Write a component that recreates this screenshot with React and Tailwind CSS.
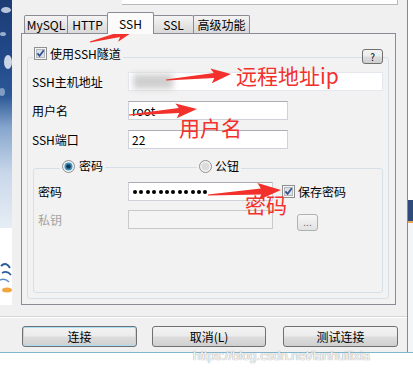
import React from "react";

function Checkbox() {
  return (
    <svg width="13" height="13" viewBox="0 0 13 13" className="shrink-0 block">
      <rect x="0.5" y="0.5" width="12" height="12" fill="#f6f6f6" stroke="#8e8f8f" />
      <rect x="2.5" y="2.5" width="8" height="8" fill="#dde2e8" stroke="#b3b8bf" />
      <path d="M3.4 6.3 L5.6 8.9 L9.8 3.2" fill="none" stroke="#34548e" strokeWidth="1.8" />
    </svg>
  );
}

function Radio({ checked }) {
  return (
    <svg width="13" height="13" viewBox="0 0 13 13" className="shrink-0 block">
      <circle cx="6.5" cy="6.5" r="6" fill="#f4f4f4" stroke="#8e8f8f" />
      {checked ? (
        <>
          <circle cx="6.5" cy="6.5" r="4" fill="#3f92c0" />
          <circle cx="6.5" cy="6.5" r="2.3" fill="#0e3a5a" />
        </>
      ) : (
        <circle cx="6.5" cy="6.5" r="4" fill="#dcdcdc" />
      )}
    </svg>
  );
}

function arrow(x1, y1, x2, y2, tailW, shaftW, headL, headW) {
  const dx = x2 - x1;
  const dy = y2 - y1;
  const L = Math.hypot(dx, dy);
  const ux = dx / L;
  const uy = dy / L;
  const nx = -uy;
  const ny = ux;
  const bx = x2 - ux * headL;
  const by = y2 - uy * headL;
  const wx = bx - ux * 3;
  const wy = by - uy * 3;
  const p = [
    [x1 + (nx * tailW) / 2, y1 + (ny * tailW) / 2],
    [bx + (nx * shaftW) / 2, by + (ny * shaftW) / 2],
    [wx + (nx * headW) / 2, wy + (ny * headW) / 2],
    [x2, y2],
    [wx - (nx * headW) / 2, wy - (ny * headW) / 2],
    [bx - (nx * shaftW) / 2, by - (ny * shaftW) / 2],
    [x1 - (nx * tailW) / 2, y1 - (ny * tailW) / 2],
  ];
  return p.map((q) => q[0].toFixed(1) + "," + q[1].toFixed(1)).join(" ");
}

const btn =
  "flex items-center justify-center rounded-[3px] border border-[#707070] bg-[linear-gradient(180deg,#f3f3f3_0%,#ebebeb_48%,#dddddd_52%,#cfcfcf_100%)] text-[12px] text-black";

export default function App() {
  return (
    <div className="relative w-[413px] h-[374px] overflow-hidden bg-white text-[12px] leading-[16px] text-black font-['Noto_Sans_CJK_SC','Noto_Sans',sans-serif]">
      <div className="flex h-[352px]">
        <div className="flex flex-col w-[407px]">
          <div className="flex h-[305px]">
            {/* left background strip */}
            <div className="w-[12px] flex flex-col">
              <div className="relative h-[228px] bg-[linear-gradient(180deg,#1c3c74_0%,#23498a_25%,#2c5896_42%,#86a6cd_56%,#c9d7ea_76%,#e7edf5_100%)]">
                <svg width="12" height="120" className="absolute left-0 top-0">
                  <ellipse cx="6" cy="10" rx="5" ry="3" fill="#dfe8f3" opacity="0.8" />
                  <ellipse cx="3" cy="34" rx="3" ry="2" fill="#c9d8ea" opacity="0.7" />
                  <ellipse cx="8" cy="62" rx="4" ry="7" fill="#e9eff6" opacity="0.85" />
                  <ellipse cx="2" cy="92" rx="3" ry="4" fill="#b9cbe2" opacity="0.6" />
                </svg>
              </div>
              <div className="flex-1 bg-white relative">
                <svg width="12" height="77" className="absolute left-0 top-0">
                  <path d="M1 38 Q6 33 10 40" stroke="#2b5d9c" strokeWidth="2" fill="none" />
                  <path d="M2 45 Q7 42 11 47" stroke="#2b5d9c" strokeWidth="1.6" fill="none" />
                  <path d="M0 52 Q5 50 9 54" stroke="#5a8cc4" strokeWidth="1.4" fill="none" />
                  <ellipse cx="7" cy="62" rx="5" ry="2.5" fill="#f0a742" />
                </svg>
              </div>
            </div>

            {/* dialog upper */}
            <div className="w-[395px] bg-[#f0f0f0] flex flex-col">
              <div className="h-[5px] ml-[110px] w-[276px] bg-white border-b border-r border-[#b9b9b9]" />

              {/* tabs */}
              <div className="h-[28px] flex items-end pl-[12px]">
                <div className="w-[44px] h-[18px] flex items-center justify-center border border-b-0 border-[#898c95] rounded-t-[2px] bg-[linear-gradient(180deg,#f4f4f4,#e3e3e3_60%,#d9d9d9)]">
                  MySQL
                </div>
                <div className="-ml-px w-[41px] h-[18px] flex items-center justify-center border border-b-0 border-[#898c95] rounded-t-[2px] bg-[linear-gradient(180deg,#f4f4f4,#e3e3e3_60%,#d9d9d9)]">
                  HTTP
                </div>
                <div className="relative z-10 -ml-px -mb-px w-[47px] h-[22px] flex items-center justify-center border border-b-0 border-[#898c95] rounded-t-[2px] bg-[#fbfbfb]">
                  SSH
                </div>
                <div className="-ml-px w-[41px] h-[18px] flex items-center justify-center border border-b-0 border-[#898c95] rounded-t-[2px] bg-[linear-gradient(180deg,#f4f4f4,#e3e3e3_60%,#d9d9d9)]">
                  SSL
                </div>
                <div className="-ml-px w-[57px] h-[18px] flex items-center justify-center border border-b-0 border-[#898c95] rounded-t-[2px] bg-[linear-gradient(180deg,#f4f4f4,#e3e3e3_60%,#d9d9d9)]">
                  高级功能
                </div>
              </div>

              {/* tab panel */}
              <div className="ml-[9px] w-[375px] h-[272px] border border-[#898c95] bg-[#f2f2f2] pt-[13px] pl-[5px]">
                <div className="relative">
                  <fieldset className="w-[362px] h-[252px] border border-[#d5dfe5] rounded-[3px]">
                    <legend className="ml-[5px] h-[20px]">
                      <div className="flex items-center gap-[3px] h-[13px] px-[1px]">
                        <Checkbox />
                        <span className="pr-[1px]">使用SSH隧道</span>
                      </div>
                    </legend>

                    <div className="mt-[5px] flex items-center pl-[4px]">
                      <div className="w-[96px]">SSH主机地址</div>
                      <div className="w-[255px] h-[19px] bg-white border border-[#e4e7ec] flex items-center">
                        <div className="ml-[4px] w-[40px] h-[15px] bg-[#cfcfcf] blur-[3px]" />
                      </div>
                    </div>
                    <div className="mt-[10px] flex items-center pl-[4px]">
                      <div className="w-[96px]">用户名</div>
                      <div className="w-[160px] h-[19px] bg-white border border-[#cfd2d8] border-t-[#abadb3] flex items-center pl-[3px]">
                        root
                      </div>
                    </div>
                    <div className="mt-[10px] flex items-center pl-[4px]">
                      <div className="w-[96px]">SSH端口</div>
                      <div className="w-[160px] h-[19px] bg-white border border-[#cfd2d8] border-t-[#abadb3] flex items-center pl-[3px]">
                        22
                      </div>
                    </div>

                    <fieldset className="mt-[10px] ml-[5px] w-[350px] h-[134px] border border-[#d5dfe5] rounded-[3px]">
                      <legend className="ml-[26px] h-[18px]">
                        <div className="flex items-start">
                          <div className="flex items-center h-[14px] pl-[2px] pr-[2px] gap-[4px]">
                            <Radio checked />
                            <span>密码</span>
                          </div>
                          <div className="w-[92px] h-px mt-[8px] bg-[#d5dfe5]" />
                          <div className="flex items-center h-[14px] pl-[2px] pr-[2px] gap-[3px]">
                            <Radio />
                            <span>公钮</span>
                          </div>
                        </div>
                      </legend>

                      <div className="mt-[5px] flex items-center pl-[4px]">
                        <div className="w-[90px]">密码</div>
                        <div className="w-[145px] h-[19px] bg-white border border-[#cfd2d8] border-t-[#abadb3] flex items-center pl-[4px] gap-[2.4px]">
                          {Array.from({ length: 12 }).map((_, i) => (
                            <span key={i} className="w-[4px] h-[4px] rounded-full bg-black" />
                          ))}
                        </div>
                        <div className="ml-[9px]">
                          <Checkbox />
                        </div>
                        <span className="ml-[3px]">保存密码</span>
                      </div>
                      <div className="mt-[9px] flex items-start pl-[4px]">
                        <div className="w-[90px] h-[19px] flex items-center text-[#a3a3a3]">私钥</div>
                        <div className="w-[145px] h-[19px] bg-[#f4f4f4] border border-[#c9c9c9]" />
                        <div className="ml-[24px] mt-[4px] w-[21px] h-[17px] rounded-[3px] border border-[#adb2b5] bg-[linear-gradient(180deg,#f7f7f7,#ececec_50%,#e2e2e2)] flex items-end justify-center pb-[3px] text-[10px] leading-[10px] text-[#6d6d6d]">
                          ...
                        </div>
                      </div>
                    </fieldset>
                  </fieldset>
                  <div className="absolute left-[335px] top-[2px] w-[21px] h-[15px] rounded-[3px] border border-[#707070] bg-[linear-gradient(180deg,#f3f3f3_0%,#ebebeb_48%,#dddddd_52%,#cfcfcf_100%)] flex items-center justify-center text-[10px] leading-[10px]">
                    ?
                  </div>
                </div>
              </div>
            </div>
          </div>

          {/* bottom button area */}
          <div className="h-[47px] bg-[#f0f0f0] flex flex-col">
            <div className="mt-[11px] h-[2px] border-t border-[#d6d6d6] border-b border-b-white" />
            <div className="mt-[8px] flex">
              <div className={`ml-[22px] w-[115px] h-[21px] ${btn} border-[#3c7fb1] shadow-[inset_0_0_0_1px_#a9dcf5]`}>
                连接
              </div>
              <div className={`ml-[15px] w-[114px] h-[21px] ${btn}`}>取消(L)</div>
              <div className={`ml-[17px] w-[115px] h-[21px] ${btn}`}>测试连接</div>
            </div>
          </div>
        </div>

        {/* dialog right border */}
        <div className="w-px bg-[#5b92cf]" />

        {/* right strip */}
        <div className="w-[5px] flex flex-col">
          <div className="h-[200px] bg-white" />
          <div className="h-[21px] bg-[#2e4b7a]" />
          <div className="h-[2px] bg-[#e9a55a]" />
          <div className="flex-1 bg-[#f3f5f8]" />
        </div>
      </div>
      <div className="h-px bg-[#7fb6cf]" />

      {/* watermark */}
      <div className="absolute left-[193px] top-[348px] text-[13px] leading-[16px] font-['Liberation_Sans',sans-serif] text-[#f6f6f6] [text-shadow:0_0_1px_#a8a8a8,0_0_1px_#a8a8a8]">
        https://blog.csdn.net/lanhuilixia
      </div>

      {/* red annotations */}
      <svg className="absolute left-0 top-0 pointer-events-none" width="413" height="374">
        <polygon points={arrow(90, 42, 134, 31, 1, 5, 15, 13)} fill="#f2302c" />
        <polygon points={arrow(166, 80, 231, 74, 1, 5, 17, 15)} fill="#f2302c" />
        <polygon points={arrow(129, 115, 197, 109, 1, 5, 18, 15)} fill="#f2302c" />
        <polygon points={arrow(208, 195, 281, 190, 1, 6, 20, 17)} fill="#f2302c" />
      </svg>
      <div className="absolute left-[236px] top-[61px] text-[21px] leading-[28px] text-[#f2302c]">远程地址ip</div>
      <div className="absolute left-[179px] top-[113px] text-[21px] leading-[28px] text-[#f2302c]">用户名</div>
      <div className="absolute left-[245px] top-[190px] text-[21px] leading-[28px] text-[#f2302c]">密码</div>
    </div>
  );
}
